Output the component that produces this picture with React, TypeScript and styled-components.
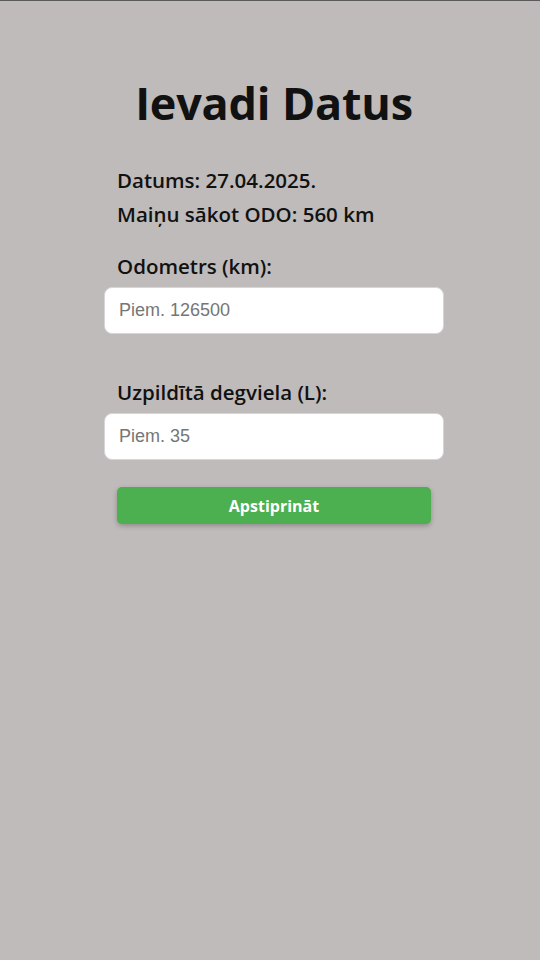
import React from 'react'
import styled, { createGlobalStyle } from 'styled-components'

const GlobalStyle = createGlobalStyle`
  html, body {
    margin: 0;
    padding: 0;
    background: #bfbbba;
  }
  body {
    border-top: 1px solid #5a5a5a;
    font-family: 'Open Sans', 'Noto Sans', sans-serif;
    color: #111;
  }
`

const Page = styled.div`
  min-height: 959px;
  display: flex;
  justify-content: center;
  padding-left: 8px;
  box-sizing: border-box;
`

const Card = styled.div`
  width: 340px;
  display: flex;
  flex-direction: column;
  padding-top: 74px;
`

const Title = styled.h1`
  margin: 0 0 36px;
  font-size: 45px;
  font-weight: 700;
  text-align: center;
  line-height: 56px;
  letter-spacing: -0.2px;
`

const InfoLine = styled.p`
  margin: 0 0 8px 13px;
  font-size: 20.5px;
  font-weight: 600;
  line-height: 26px;
`

const Field = styled.div`
  display: flex;
  flex-direction: column;
  margin-top: ${({ $top }: { $top: number }) => $top}px;
`

const Label = styled.label`
  margin: 0 0 8px 13px;
  font-size: 20.5px;
  font-weight: 600;
  line-height: 26px;
`

const Input = styled.input`
  height: 47px;
  box-sizing: border-box;
  border: 1px solid #d6d6d6;
  border-radius: 8px;
  background: #fff;
  padding: 0 14px;
  font-family: 'Liberation Sans', Arial, sans-serif;
  font-size: 18px;
  color: #222;
  outline: none;

  &::placeholder {
    color: #767676;
  }
`

const Submit = styled.button`
  margin: 27px 13px 0;
  height: 37px;
  border: none;
  border-radius: 5px;
  background: #4caf50;
  color: #fff;
  font-family: 'Open Sans', 'Noto Sans', sans-serif;
  font-size: 16px;
  font-weight: 700;
  box-shadow: 0 2px 5px rgba(0, 0, 0, 0.25);
  cursor: pointer;
`

export default function App() {
  return (
    <>
      <GlobalStyle />
      <Page>
        <Card>
          <Title>Ievadi Datus</Title>
          <InfoLine>Datums: 27.04.2025.</InfoLine>
          <InfoLine>Maiņu sākot ODO: 560 km</InfoLine>
          <Field $top={18}>
            <Label htmlFor="odo">Odometrs (km):</Label>
            <Input id="odo" type="number" placeholder="Piem. 126500" />
          </Field>
          <Field $top={45}>
            <Label htmlFor="fuel">Uzpildītā degviela (L):</Label>
            <Input id="fuel" type="number" placeholder="Piem. 35" />
          </Field>
          <Submit type="button">Apstiprināt</Submit>
        </Card>
      </Page>
    </>
  )
}
